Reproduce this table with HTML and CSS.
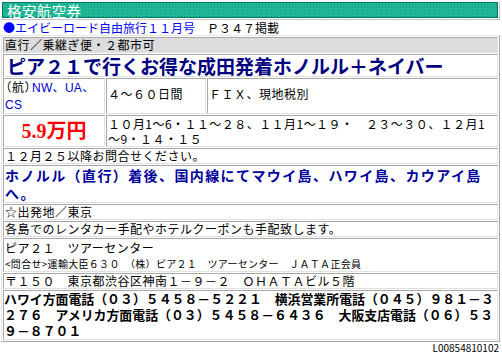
FILE: index.html
```html
<!DOCTYPE html>
<html lang="ja">
<head>
<meta charset="utf-8">
<link rel="stylesheet" href="styles.css">
</head>
<body>
<div class="page">
  <div class="hdr-frame"><div class="hdr">格安航空券</div></div>
  <div class="src"><a class="src-link">●エイビーロード自由旅行１１月号</a>　Ｐ３４７掲載</div>
  <table class="info">
    <tr><td colspan="3" class="route">直行／乗継ぎ便・２都市可</td></tr>
    <tr><td colspan="3" class="title">ピア２１で行くお得な成田発着ホノルル＋ネイバー</td></tr>
    <tr class="r3">
      <td class="c1"><span class="kou">（航）</span><span class="air">NW、UA、<br>CS</span></td>
      <td class="c2">４〜６０日間</td>
      <td class="c3">ＦＩＸ、現地税別</td>
    </tr>
    <tr class="r4">
      <td class="price">5.9万円</td>
      <td colspan="2" class="dates">１０月1〜6・１１〜２８、１１月1〜１９・　２３〜３０、１２月1〜9・１４・１５</td>
    </tr>
    <tr><td colspan="3">１２月２５以降お問合せください。</td></tr>
    <tr><td colspan="3" class="desc">ホノルル（直行）着後、国内線にてマウイ島、ハワイ島、カウアイ島へ。</td></tr>
    <tr><td colspan="3">☆出発地／東京</td></tr>
    <tr><td colspan="3">各島でのレンタカー手配やホテルクーポンも手配致します。</td></tr>
    <tr><td colspan="3" class="agency"><div class="agname">ピア２１　ツアーセンター</div><div class="small">&lt;問合せ&gt;運輸大臣６３０　（株）ピア２１　ツアーセンター　ＪＡＴＡ正会員</div></td></tr>
    <tr><td colspan="3" class="addr">〒１５０　東京都渋谷区神南１－９－２　ＯＨＡＴＡビル５階</td></tr>
    <tr><td colspan="3" class="phone">ハワイ方面電話（０３）５４５８－５２２１　横浜営業所電話（０４５）９８１－３２７６　アメリカ方面電話（０３）５４５８－６４３６　大阪支店電話（０６）５３９－８７０１</td></tr>
  </table>
  <div class="code">L00854810102</div>
</div>
</body>
</html>
```

FILE: styles.css
```css
html, body {
  margin: 0;
  padding: 0;
  background: #ffffff;
}
body {
  font-family: "Noto Sans CJK JP", "Noto Sans", sans-serif;
  font-size: 12px;
  line-height: 14px;
  color: #000;
}
.page {
  width: 502px;
  padding: 0 2px 0 1px;
  box-sizing: border-box;
}
.hdr-frame {
  border: 1px solid #c8c8c8;
  border-left: none;
  border-top: none;
  padding: 1px;
  margin-top: 1px;
}
.hdr {
  height: 14px;
  line-height: 15px;
  border: 1px solid #007a66;
  background-color: #1fb897;
  background-image: radial-gradient(circle, #0a9a7e 0.8px, transparent 1px);
  background-size: 3px 3px;
  color: #ffffff;
  font-size: 14.5px;
  padding-left: 4px;
  letter-spacing: 0.4px;
}
.src {
  height: 14px;
  margin-top: 1px;
  padding-left: 2px;
  line-height: 14px;
  font-size: 12px;
}
.src-link {
  color: #0000ff;
}
.info {
  width: 100%;
  margin-top: 0;
  border-collapse: separate;
  border-spacing: 1px;
  border: 1px solid;
  border-color: #e6e6e6 #a8a8a8 #a8a8a8 #e6e6e6;
}
.info td {
  border: 1px solid;
  border-color: #a8a8a8 #e0e0e0 #e0e0e0 #a8a8a8;
  padding: 0 1px;
  vertical-align: middle;
  letter-spacing: 0.5px;
  line-height: 14px;
}
.route {
  background: #dcdcdc;
}
.info .title {
  color: #000080;
  font-weight: bold;
  font-size: 19px;
  line-height: 21px;
  letter-spacing: 0;
  padding-left: 3px;
}
.r3 td {
  height: 30px;
  vertical-align: top;
  line-height: 15px;
}
.info .c1 {
  width: 98px;
  letter-spacing: 0;
  white-space: nowrap;
}
.kou {
  font-feature-settings: "palt";
  letter-spacing: 1px;
}
.info .c2 { width: 96px; padding-top: 7px; height: 23px; }
.info .c3 { padding-top: 7px; height: 23px; }
.air {
  color: #0000cc;
  font-family: "Liberation Sans", "Noto Sans CJK JP", sans-serif;
  letter-spacing: 0.3px;
}
.info .price {
  color: #ff0000;
  font-family: "Liberation Serif", "Noto Sans CJK JP", serif;
  font-weight: bold;
  font-size: 20px;
  text-align: center;
  letter-spacing: 0;
}
.info .dates {
  line-height: 15px;
  height: 30px;
  vertical-align: top;
  letter-spacing: 0.45px;
  line-break: loose;
}
.info .desc {
  color: #00009c;
  font-weight: bold;
  font-size: 14px;
  line-height: 18px;
  letter-spacing: 1.4px;
}
.agname {
  line-height: 17px;
}
.small {
  font-size: 10px;
  line-height: 15px;
  letter-spacing: 0.3px;
}
.info .phone {
  font-weight: bold;
  font-size: 12.9px;
  line-height: 16px;
  letter-spacing: 0;
  padding: 0;
}
.code {
  text-align: right;
  font-size: 10px;
  line-height: 12px;
  margin-top: 0;
  padding-right: 1px;
}
```
